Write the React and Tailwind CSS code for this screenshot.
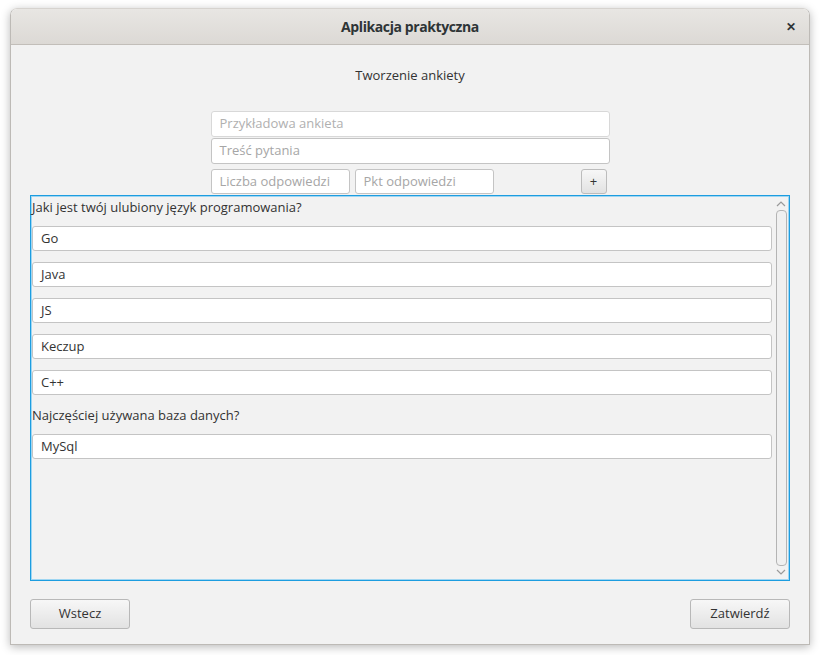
import React from 'react';

const font = { fontFamily: '"Open Sans", "Noto Sans", sans-serif' };

function Field({ text, placeholder, className = '' }) {
  return <div className={`flex items-center h-[25px] bg-white border border-[#c4c4c4] rounded-[3px] px-[8px] text-[13px] ${placeholder ? 'text-[#a6a6a6]' : 'text-[#333]'} ${className}`}>
      {text}
    </div>;
}

function Btn({ children, className = '' }) {
  return <div className={`flex items-center justify-center h-[30px] w-[100px] rounded-[3px] border border-[#b8b8b8] bg-gradient-to-b from-[#f7f7f7] to-[#e2e2e2] text-[13px] text-[#333] ${className}`}>
      {children}
    </div>;
}

const questions = [{
  title: 'Jaki jest twój ulubiony język programowania?',
  answers: ['Go', 'Java', 'JS', 'Keczup', 'C++']
}, {
  title: 'Najczęściej używana baza danych?',
  answers: ['MySql']
}];

export default function App() {
  return <div style={font} className="w-[820px] h-[655px] bg-white pl-[10px] pt-[8px] overflow-hidden">
      <div className="w-[800px] h-[637px] flex flex-col rounded-t-[7px] overflow-hidden shadow-[0_2px_10px_rgba(0,0,0,0.28)] border border-[#bdbab6] border-t-[#d6d3cf]">
        {/* title bar */}
        <div className="relative flex items-center justify-center h-[36px] shrink-0 bg-gradient-to-b from-[#e8e6e3] to-[#dcd9d5] border-b border-[#c2beb9]">
          <span className="text-[14px] font-bold text-[#2e3436] tracking-[-0.4px]">Aplikacja praktyczna</span>
          <span className="absolute right-[13px] top-[9px] text-[12px] font-bold text-[#2e3436]">✕</span>
        </div>

        {/* body */}
        <div className="flex-1 flex flex-col bg-[#f2f2f2] px-[19px]">
          <div className="text-center text-[13px] text-[#333] leading-[18px] mt-[21px]">Tworzenie ankiety</div>

          <div className="w-[399px] mx-auto mt-[27px] flex flex-col">
            <Field text="Przykładowa ankieta" placeholder className="h-[26px] bg-[#f5f5f5] border-[#d8d8d8] text-[#b0b0b0]" />
            <Field text="Treść pytania" placeholder className="h-[26px] mt-[1px]" />
            <div className="flex items-center mt-[5px]">
              <Field text="Liczba odpowiedzi" placeholder className="w-[139px]" />
              <Field text="Pkt odpowiedzi" placeholder className="w-[139px] ml-[5px]" />
              <div className="ml-[87px] w-[26px] h-[25px] flex items-center justify-center rounded-[3px] border border-[#bcbcbc] bg-gradient-to-b from-[#f7f7f7] to-[#e2e2e2] text-[13px] text-[#333]">+</div>
            </div>
          </div>

          {/* scroll panel */}
          <div className="mt-[1px] h-[386px] flex border border-[#1d9de0] shadow-[inset_0_0_0_1px_#9fd6f2] bg-[#f2f2f2]">
            <div className="flex-1 flex flex-col pl-[1px] pr-[2px] pt-[2px]">
              {questions.map(q => <div key={q.title} className="flex flex-col">
                  <div className="h-[18px] leading-[18px] text-[13px] text-[#333] mb-[10px]">{q.title}</div>
                  {q.answers.map(a => <Field key={a} text={a} className="mb-[11px]" />)}
                </div>)}
            </div>
            <div className="w-[14px] flex flex-col items-center py-[2px] mr-[1px]">
              <svg width="10" height="8" viewBox="0 0 10 8" className="mt-[2px]"><path d="M1 6 L5 2 L9 6" fill="none" stroke="#9a9a9a" strokeWidth="1.2" /></svg>
              <div className="flex-1 w-[11px] mt-[2px] mb-[2px] rounded-[4px] border border-[#b4b4b4] bg-[#f0f0f0]" />
              <svg width="10" height="8" viewBox="0 0 10 8" className="mb-[2px]"><path d="M1 2 L5 6 L9 2" fill="none" stroke="#9a9a9a" strokeWidth="1.2" /></svg>
            </div>
          </div>

          <div className="flex justify-between mt-[18px]">
            <Btn>Wstecz</Btn>
            <Btn>Zatwierdź</Btn>
          </div>
        </div>
      </div>
    </div>;
}
